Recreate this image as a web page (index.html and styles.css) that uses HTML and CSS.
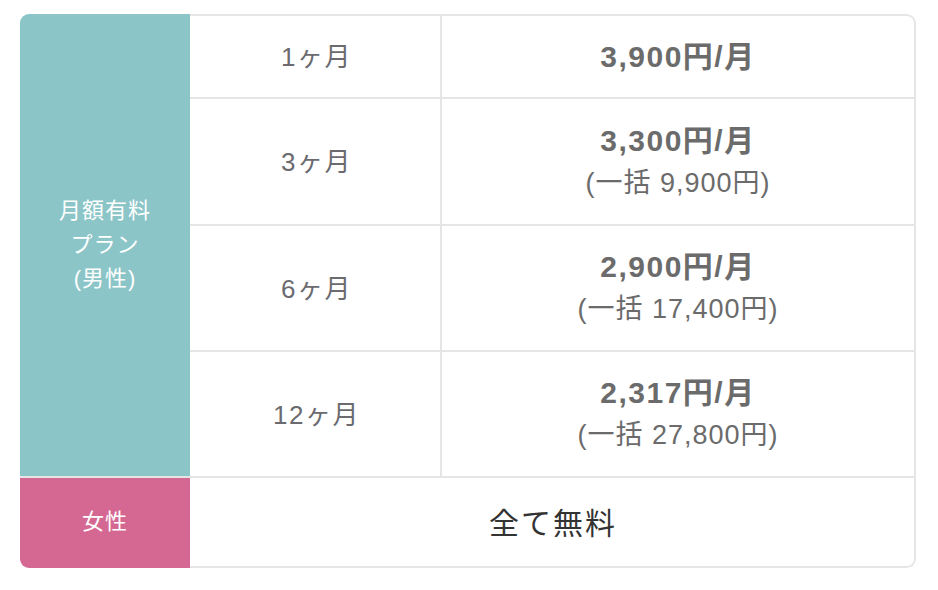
FILE: index.html
```html
<!DOCTYPE html>
<html lang="ja">
<head>
<meta charset="utf-8">
<link rel="stylesheet" href="styles.css">
</head>
<body>
<div class="plan">
  <div class="head head-male">月額有料<br>プラン<br>(男性)</div>
  <div class="term first">1ヶ月</div>
  <div class="price first last-col top-right"><b>3,900円/月</b></div>
  <div class="term">3ヶ月</div>
  <div class="price last-col"><b>3,300円/月</b><span>(一括 9,900円)</span></div>
  <div class="term">6ヶ月</div>
  <div class="price last-col"><b>2,900円/月</b><span>(一括 17,400円)</span></div>
  <div class="term">12ヶ月</div>
  <div class="price last-col"><b>2,317円/月</b><span>(一括 27,800円)</span></div>
  <div class="head head-female">女性</div>
  <div class="free">全て無料</div>
</div>
</body>
</html>
```
FILE: styles.css
```css
html, body {
  margin: 0;
  padding: 0;
  background: #fff;
}
body {
  font-family: "Liberation Sans", "Noto Sans CJK JP", sans-serif;
  padding: 14px 0 0 20px;
}
.plan {
  display: grid;
  width: 896px;
  grid-template-columns: 170px 252px 474px;
  grid-template-rows: 85px 127px 126px 126px 90px;
  border-radius: 9px;
  overflow: hidden;
}
.head {
  display: flex;
  align-items: center;
  justify-content: center;
  text-align: center;
  color: #fff;
  font-size: 22px;
  line-height: 34px;
  letter-spacing: 1px;
}
.head-male {
  grid-row: 1 / 5;
  background: #8bc5c7;
  border-bottom: 2px solid #e5e5e5;
}
.head-female {
  background: #d56892;
  padding-bottom: 2px;
}
.term, .price, .free {
  display: flex;
  flex-direction: column;
  align-items: center;
  justify-content: center;
  border-bottom: 2px solid #e5e5e5;
  background: #fff;
}
.term {
  border-right: 2px solid #e5e5e5;
  color: #6b6b6f;
  font-size: 26px;
  letter-spacing: 1.5px;
  padding-left: 3px;
  padding-bottom: 4px;
}
.first {
  border-top: 2px solid #e5e5e5;
}
.last-col, .free {
  border-right: 2px solid #e5e5e5;
}
.top-right {
  border-top-right-radius: 9px;
}
.price {
  color: #6b6b6b;
  line-height: 43px;
}
.price b {
  font-size: 30px;
  font-weight: bold;
  letter-spacing: 1.5px;
}
.price span {
  font-size: 27px;
  letter-spacing: 1px;
}
.free {
  grid-column: 2 / 4;
  border-bottom-right-radius: 9px;
  color: #333;
  font-size: 30px;
  letter-spacing: 2px;
  padding-left: 2px;
  padding-bottom: 2px;
}
```
